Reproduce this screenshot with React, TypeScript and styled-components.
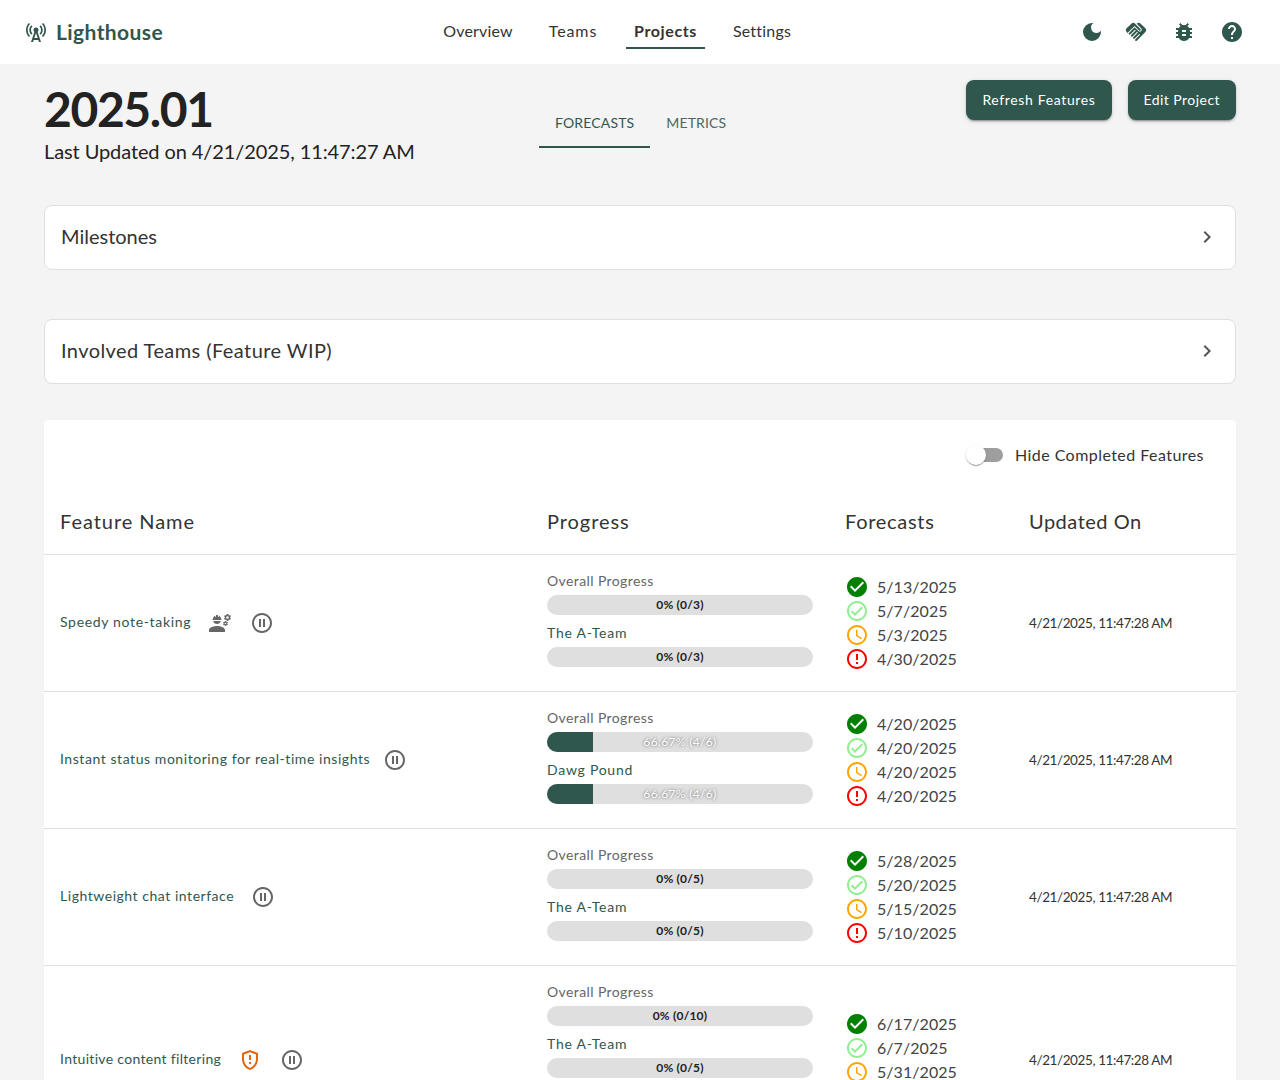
import React from 'react'
import styled, { createGlobalStyle } from 'styled-components'
import {
  MdCellTower,
  MdDarkMode,
  MdHandshake,
  MdBugReport,
  MdHelp,
  MdChevronRight,
  MdEngineering,
  MdOutlinePauseCircle,
  MdCheckCircle,
  MdOutlineCheckCircle,
  MdAccessTime,
  MdErrorOutline,
  MdOutlineGppMaybe,
} from 'react-icons/md'

const green = '#30574e'

const GlobalStyle = createGlobalStyle`
  html, body {
    margin: 0;
    height: 1080px;
    overflow: hidden;
    background: #f4f4f4;
    font-family: "Lato", "Noto Sans", sans-serif;
    color: #222;
  }
`

const Header = styled.header`
  height: 64px;
  background: #fff;
  display: grid;
  grid-template-columns: 412px auto 1fr;
  align-items: center;
  padding: 0 24px;
  box-sizing: border-box;
`
const Logo = styled.div`
  display: flex;
  align-items: center;
  gap: 8px;
  color: ${green};
  svg { flex: none; }
`
const LogoText = styled.span`
  font-size: 21px;
  font-weight: 700;
  letter-spacing: 0.4px;
  padding-bottom: 2px;
`
const Nav = styled.nav`
  display: flex;
  gap: 20px;
  height: 64px;
  align-items: center;
`
const NavItem = styled.a<{ $width: number; $spacing: number; $active?: boolean }>`
  display: block;
  width: ${(p) => p.$width}px;
  padding: 5px 0;
  text-align: center;
  font-size: 16px;
  line-height: 22px;
  letter-spacing: ${(p) => p.$spacing}px;
  color: #333;
  font-weight: ${(p) => (p.$active ? 700 : 400)};
  border-bottom: 2px solid ${(p) => (p.$active ? green : 'transparent')};
`
const HeaderIcons = styled.div`
  display: flex;
  justify-content: flex-end;
  color: ${green};
`
const HeaderIcon = styled.span<{ $shift?: number }>`
  width: 48px;
  height: 48px;
  display: flex;
  align-items: center;
  justify-content: center;
  margin-right: ${(p) => p.$shift ?? 0}px;
`

const Main = styled.main`
  padding: 15px 44px 0;
`
const TitleRow = styled.div`
  display: grid;
  grid-template-columns: 495px 1fr auto;
  height: 126px;
  align-items: start;
`
const Title = styled.h1`
  margin: 0;
  font-size: 48px;
  line-height: 60px;
  font-weight: 700;
  color: #222;
  letter-spacing: -1.4px;
`
const Updated = styled.div`
  font-size: 20px;
  line-height: 24px;
  letter-spacing: -0.1px;
  color: #222;
`
const Tabs = styled.div`
  display: flex;
  margin-top: 21px;
`
const Tab = styled.div<{ $active?: boolean }>`
  height: 48px;
  box-sizing: border-box;
  padding: 0 16px 2px;
  display: flex;
  align-items: center;
  font-size: 14px;
  letter-spacing: 0.15px;
  color: ${(p) => (p.$active ? green : '#4d6660')};
  border-bottom: 2px solid ${(p) => (p.$active ? green : 'transparent')};
`
const Actions = styled.div`
  display: flex;
  gap: 16px;
  margin-top: 1px;
`
const ActionButton = styled.button<{ $spacing: number }>`
  height: 40px;
  padding: 0 16px 2px;
  border: 0;
  border-radius: 8px;
  background: ${green};
  color: #fff;
  font: inherit;
  font-size: 14px;
  letter-spacing: ${(p) => p.$spacing}px;
  box-shadow: 0 3px 1px -2px rgba(0,0,0,.2), 0 2px 2px rgba(0,0,0,.14), 0 1px 5px rgba(0,0,0,.12);
`
const Accordion = styled.div`
  height: 65px;
  box-sizing: border-box;
  background: #fff;
  border: 1px solid #e0e0e0;
  border-radius: 8px;
  padding: 0 16px;
  display: flex;
  align-items: center;
  justify-content: space-between;
  margin-bottom: 49px;
  svg { color: #555; margin-bottom: 1px; }
`
const AccordionTitle = styled.span<{ $spacing: number }>`
  font-size: 20px;
  letter-spacing: ${(p) => p.$spacing}px;
  color: #333;
  padding-bottom: 4px;
`
const Card = styled.section`
  background: #fff;
  border-radius: 4px;
  margin-top: -13px;
  box-shadow: 0 0 1px rgba(0,0,0,.05);
`
const ToggleRow = styled.div`
  height: 70px;
  box-sizing: border-box;
  padding: 0 32px 0 0;
  display: flex;
  justify-content: flex-end;
  align-items: center;
  gap: 12px;
`
const ToggleLabel = styled.span`
  font-size: 16px;
  letter-spacing: 0.45px;
  color: #333;
  padding-bottom: 2px;
`
const SwitchTrack = styled.span`
  position: relative;
  display: block;
  width: 34px;
  height: 14px;
  border-radius: 7px;
  background: #9e9e9e;
`
const SwitchThumb = styled.span`
  position: absolute;
  left: -3px;
  top: -3px;
  width: 20px;
  height: 20px;
  border-radius: 50%;
  background: #fff;
  box-shadow: 0 2px 1px -1px rgba(0,0,0,.2), 0 1px 1px rgba(0,0,0,.14), 0 1px 3px rgba(0,0,0,.12);
`
const Table = styled.table`
  width: 100%;
  table-layout: fixed;
  border-collapse: collapse;
`
const HeadCell = styled.th<{ $spacing: number }>`
  height: 64px;
  box-sizing: border-box;
  padding: 0 16px 2px;
  text-align: left;
  font-size: 20px;
  font-weight: 400;
  letter-spacing: ${(p) => p.$spacing}px;
  color: #333;
  border-bottom: 1px solid #e0e0e0;
`
const Cell = styled.td`
  padding: 16px;
  vertical-align: middle;
  border-bottom: 1px solid #e0e0e0;
`
const NameWrap = styled.div`
  display: flex;
  align-items: center;
  gap: 18px;
`
const FeatureName = styled.span<{ $width: number; $spacing: number }>`
  flex: none;
  width: ${(p) => p.$width}px;
  white-space: nowrap;
  font-size: 14px;
  letter-spacing: ${(p) => p.$spacing}px;
  color: ${green};
  padding-bottom: 2px;
`
const StateIcon = styled.span<{ $color: string }>`
  display: flex;
  color: ${(p) => p.$color};
`
const Group = styled.div`
  height: 52px;
`
const GroupLabel = styled.div<{ $muted?: boolean }>`
  height: 24px;
  line-height: 20px;
  font-size: 14px;
  letter-spacing: ${(p) => (p.$muted ? 0.4 : 0.75)}px;
  color: ${(p) => (p.$muted ? '#666' : green)};
`
const Bar = styled.div`
  position: relative;
  height: 20px;
  border-radius: 10px;
  background: #dfdfdf;
  overflow: hidden;
`
const BarFill = styled.div`
  height: 100%;
  background: ${green};
`
const BarText = styled.div<{ $light: boolean }>`
  position: absolute;
  inset: 0;
  display: flex;
  align-items: center;
  justify-content: center;
  font-size: 12px;
  font-weight: ${(p) => (p.$light ? 400 : 700)};
  letter-spacing: ${(p) => (p.$light ? 0.35 : 0.2)}px;
  color: ${(p) => (p.$light ? '#fff' : '#222')};
  text-shadow: ${(p) => (p.$light ? '0 0 3px rgba(0,0,0,.6)' : 'none')};
`
const ForecastList = styled.div`
  display: flex;
  flex-direction: column;
`
const ForecastRow = styled.div`
  display: flex;
  align-items: center;
  gap: 8px;
  height: 24px;
`
const ForecastDate = styled.span`
  font-size: 16px;
  letter-spacing: 0.05px;
  color: #444;
`
const UpdatedCell = styled.span`
  display: block;
  font-size: 13.5px;
  letter-spacing: -0.4px;
  color: #333;
`

type Team = { name: string; done: number; total: number }
type Feature = {
  name: string
  nameWidth: number
  nameSpacing: number
  icons?: 'worker' | 'shield'
  total: Team
  teams: Team[]
  dates: string[]
}

const features: Feature[] = [
  {
    name: 'Speedy note-taking',
    nameWidth: 130,
    nameSpacing: 0.67,
    icons: 'worker',
    total: { name: 'Overall Progress', done: 0, total: 3 },
    teams: [{ name: 'The A-Team', done: 0, total: 3 }],
    dates: ['5/13/2025', '5/7/2025', '5/3/2025', '4/30/2025'],
  },
  {
    name: 'Instant status monitoring for real-time insights',
    nameWidth: 305,
    nameSpacing: 0.56,
    total: { name: 'Overall Progress', done: 4, total: 6 },
    teams: [{ name: 'Dawg Pound', done: 4, total: 6 }],
    dates: ['4/20/2025', '4/20/2025', '4/20/2025', '4/20/2025'],
  },
  {
    name: 'Lightweight chat interface',
    nameWidth: 173,
    nameSpacing: 0.54,
    total: { name: 'Overall Progress', done: 0, total: 5 },
    teams: [{ name: 'The A-Team', done: 0, total: 5 }],
    dates: ['5/28/2025', '5/20/2025', '5/15/2025', '5/10/2025'],
  },
  {
    name: 'Intuitive content filtering',
    nameWidth: 160,
    nameSpacing: 0.32,
    icons: 'shield',
    total: { name: 'Overall Progress', done: 0, total: 10 },
    teams: [
      { name: 'The A-Team', done: 0, total: 5 },
      { name: 'Dawg Pound', done: 0, total: 5 },
    ],
    dates: ['6/17/2025', '6/7/2025', '5/31/2025', '5/24/2025'],
  },
]

const forecastIcons = [
  <MdCheckCircle size={24} color="#008000" />,
  <MdOutlineCheckCircle size={24} color="#90ee90" />,
  <MdAccessTime size={24} color="#ffa500" />,
  <MdErrorOutline size={24} color="#ff0000" />,
]

const ProgressGroup: React.FC<{ team: Team; muted?: boolean }> = ({ team, muted }) => {
  const pct = team.done / team.total
  const label = pct > 0 ? `${(pct * 100).toFixed(2)}%` : '0%'
  return (
    <Group>
      <GroupLabel $muted={muted}>{team.name}</GroupLabel>
      <Bar>
        {/* fill is drawn at a quarter of the share, as in the app */}
        <BarFill style={{ width: `${pct * 25.9}%` }} />
        <BarText $light={pct > 0}>{`${label} (${team.done}/${team.total})`}</BarText>
      </Bar>
    </Group>
  )
}

const App: React.FC = () => (
  <>
    <GlobalStyle />
    <Header>
      <Logo>
        <MdCellTower size={24} />
        <LogoText>Lighthouse</LogoText>
      </Logo>
      <Nav>
        <NavItem $width={84} $spacing={0.15}>Overview</NavItem>
        <NavItem $width={66} $spacing={0.9}>Teams</NavItem>
        <NavItem $width={79} $spacing={0.6} $active>Projects</NavItem>
        <NavItem $width={74} $spacing={0.2}>Settings</NavItem>
      </Nav>
      <HeaderIcons>
        <HeaderIcon $shift={-4}><MdDarkMode size={24} /></HeaderIcon>
        <HeaderIcon><MdHandshake size={24} /></HeaderIcon>
        <HeaderIcon><MdBugReport size={24} /></HeaderIcon>
        <HeaderIcon><MdHelp size={24} /></HeaderIcon>
      </HeaderIcons>
    </Header>
    <Main>
      <TitleRow>
        <div>
          <Title>2025.01</Title>
          <Updated>Last Updated on 4/21/2025, 11:47:27 AM</Updated>
        </div>
        <Tabs>
          <Tab $active>FORECASTS</Tab>
          <Tab>METRICS</Tab>
        </Tabs>
        <Actions>
          <ActionButton $spacing={0.64}>Refresh Features</ActionButton>
          <ActionButton $spacing={0.45}>Edit Project</ActionButton>
        </Actions>
      </TitleRow>
      <Accordion>
        <AccordionTitle $spacing={0}>Milestones</AccordionTitle>
        <MdChevronRight size={24} />
      </Accordion>
      <Accordion>
        <AccordionTitle $spacing={0.42}>Involved Teams (Feature WIP)</AccordionTitle>
        <MdChevronRight size={24} />
      </Accordion>
      <Card>
        <ToggleRow>
          <SwitchTrack><SwitchThumb /></SwitchTrack>
          <ToggleLabel>Hide Completed Features</ToggleLabel>
        </ToggleRow>
        <Table>
          <colgroup>
            <col width={487} />
            <col width={298} />
            <col width={184} />
            <col width={223} />
          </colgroup>
          <thead>
            <tr>
              <HeadCell $spacing={0.95}>Feature Name</HeadCell>
              <HeadCell $spacing={0.95}>Progress</HeadCell>
              <HeadCell $spacing={0.7}>Forecasts</HeadCell>
              <HeadCell $spacing={0.5}>Updated On</HeadCell>
            </tr>
          </thead>
          <tbody>
            {features.map((f) => (
              <tr key={f.name}>
                <Cell>
                  <NameWrap>
                    <FeatureName $width={f.nameWidth} $spacing={f.nameSpacing}>{f.name}</FeatureName>
                    {f.icons === 'worker' && (
                      <StateIcon $color="#666"><MdEngineering size={24} /></StateIcon>
                    )}
                    {f.icons === 'shield' && (
                      <StateIcon $color="#e8650a"><MdOutlineGppMaybe size={24} /></StateIcon>
                    )}
                    <StateIcon $color="#666"><MdOutlinePauseCircle size={24} /></StateIcon>
                  </NameWrap>
                </Cell>
                <Cell>
                  <ProgressGroup team={f.total} muted />
                  {f.teams.map((t) => (
                    <ProgressGroup key={t.name} team={t} />
                  ))}
                </Cell>
                <Cell>
                  <ForecastList>
                    {f.dates.map((d, i) => (
                      <ForecastRow key={i}>
                        {forecastIcons[i]}
                        <ForecastDate>{d}</ForecastDate>
                      </ForecastRow>
                    ))}
                  </ForecastList>
                </Cell>
                <Cell>
                  <UpdatedCell>4/21/2025, 11:47:28 AM</UpdatedCell>
                </Cell>
              </tr>
            ))}
          </tbody>
        </Table>
      </Card>
    </Main>
  </>
)

export default App
